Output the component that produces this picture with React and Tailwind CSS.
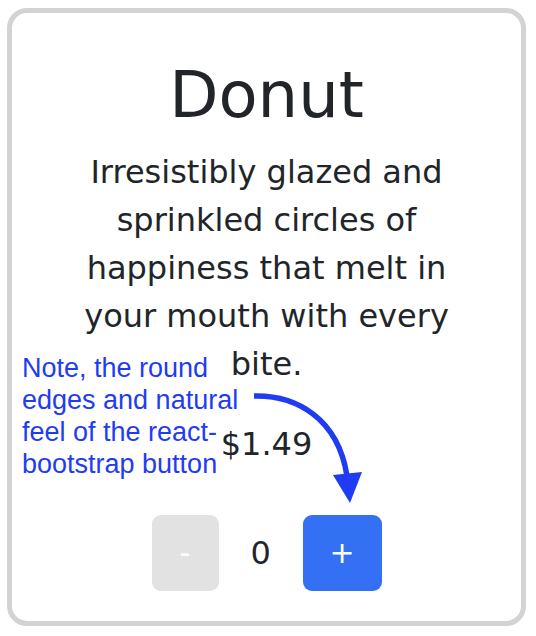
import React, { useState } from "react";

export default function App() {
  const [count, setCount] = useState(0);

  return (
    <div className="relative w-[536px] h-[636px] bg-white pt-[8px] pl-[7px]">
      <div
        className="w-[519px] h-[618px] border-[5px] border-[#d3d3d3] rounded-[20px] flex flex-col items-center pt-[44px] text-[#212529]"
        style={{ fontFamily: '"DejaVu Sans", sans-serif' }}
      >
        <h1 className="text-[64px] leading-[1.2]">Donut</h1>
        <p className="mt-[14px] w-[400px] text-center text-[32px] leading-[48px]">
          Irresistibly glazed and sprinkled circles of happiness that melt in
          your mouth with every bite.
        </p>
        <div className="mt-[32px] text-[32px] leading-[48px]">$1.49</div>
        <div className="mt-[47px] flex items-center gap-8">
          <button
            onClick={() => setCount(Math.max(0, count - 1))}
            disabled={count === 0}
            className="w-[67px] h-[76px] rounded-[9px] bg-[#e2e2e2] text-white text-[30px] leading-none"
          >
            -
          </button>
          <span className="w-[20px] text-center text-[32px] leading-none">{count}</span>
          <button
            onClick={() => setCount(count + 1)}
            className="w-[79px] h-[76px] rounded-[9px] bg-[#3470f4] text-white text-[30px] leading-none"
          >
            +
          </button>
        </div>
      </div>

      <div
        className="absolute left-[22px] top-[352px] text-[27px] leading-[32px] text-[#1f3cf2]"
        style={{ fontFamily: '"Liberation Sans", Arial, sans-serif' }}
      >
        Note, the round
        <br />
        edges and natural
        <br />
        feel of the react-
        <br />
        bootstrap button
      </div>

      <svg className="absolute left-0 top-0 pointer-events-none" width="536" height="636">
        <path
          d="M254 396 C 296 395, 338 418, 347 476"
          fill="none"
          stroke="#1f3cf2"
          strokeWidth="5.5"
        />
        <path d="M333 475 L362 472 L350 503 Z" fill="#1f3cf2" />
      </svg>
    </div>
  );
}
